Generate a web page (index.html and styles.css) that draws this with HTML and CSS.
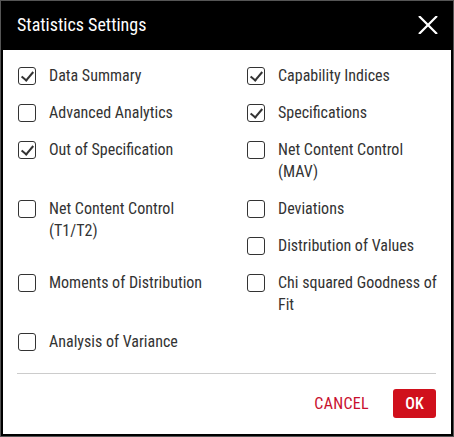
FILE: index.html
```html
<!DOCTYPE html>
<html>
<head>
<meta charset="utf-8">
<link rel="stylesheet" href="styles.css">
</head>
<body>
<div class="dialog">
  <div class="frame">
    <div class="header">
      <span class="title">Statistics Settings</span>
      <svg class="close" width="20" height="18" viewBox="0 0 20 18"><path d="M1 0 L19 18 M19 0 L1 18" stroke="#fff" stroke-width="2.2" fill="none"/></svg>
    </div>
    <div class="body">
      <div class="grid">
        <label class="item"><span class="cb checked"></span><span class="txt">Data Summary</span></label>
        <label class="item"><span class="cb checked"></span><span class="txt">Capability Indices</span></label>
        <label class="item"><span class="cb"></span><span class="txt">Advanced Analytics</span></label>
        <label class="item"><span class="cb checked"></span><span class="txt">Specifications</span></label>
        <label class="item"><span class="cb checked"></span><span class="txt">Out of Specification</span></label>
        <label class="item"><span class="cb"></span><span class="txt">Net Content Control (MAV)</span></label>
        <label class="item span2"><span class="cb"></span><span class="txt">Net Content Control (T1/T2)</span></label>
        <label class="item"><span class="cb"></span><span class="txt">Deviations</span></label>
        <label class="item"><span class="cb"></span><span class="txt">Distribution of Values</span></label>
        <label class="item"><span class="cb"></span><span class="txt">Moments of Distribution</span></label>
        <label class="item"><span class="cb"></span><span class="txt">Chi squared Goodness of Fit</span></label>
        <label class="item"><span class="cb"></span><span class="txt">Analysis of Variance</span></label>
      </div>
    </div>
    <div class="footer">
      <div class="actions">
        <button class="btn cancel">CANCEL</button>
        <button class="btn ok">OK</button>
      </div>
    </div>
  </div>
</div>
</body>
</html>
```
FILE: styles.css
```css
* { box-sizing: border-box; }
html, body { margin: 0; padding: 0; background: #fff; }
body {
  font-family: "Roboto Condensed", Roboto, "Liberation Sans", sans-serif;
}
.dialog {
  width: 454px;
  height: 437px;
  border: 1px solid #555;
}
.frame {
  height: 100%;
  border: 2px solid #000;
  display: flex;
  flex-direction: column;
  background: #fff;
}
.header {
  height: 47px;
  background: #000;
  display: flex;
  align-items: center;
  justify-content: space-between;
  padding: 0 13px 4px 14px;
}
.title {
  color: #fff;
  font-size: 18px;
  line-height: 22px;
}
.close { display: block; }
.body {
  padding: 7px 12px 0 15px;
  flex: 1;
}
.grid {
  display: grid;
  grid-template-columns: 190px 1fr;
  column-gap: 39px;
}
.item {
  display: flex;
  align-items: flex-start;
  gap: 13px;
  padding: 7.5px 0;
}
.span2 { grid-row: span 2; }
.cb {
  flex: none;
  width: 18px;
  height: 18px;
  margin-top: 2px;
  border: 1.5px solid #333;
  border-radius: 3px;
  position: relative;
}
.cb.checked::after {
  content: "";
  position: absolute;
  left: 5px;
  top: 1px;
  width: 5px;
  height: 10px;
  border-right: 2px solid #333;
  border-bottom: 2px solid #333;
  transform: rotate(40deg);
}
.txt {
  font-size: 16px;
  line-height: 22px;
  color: #333;
}
.footer {
  padding: 0 15px 16px 14px;
}
.actions {
  border-top: 1px solid #ccc;
  padding-top: 15px;
  display: flex;
  justify-content: flex-end;
  align-items: center;
  gap: 14px;
}
.btn {
  font-family: inherit;
  font-size: 16px;
  border: none;
  background: none;
  cursor: pointer;
  height: 29px;
  border-radius: 3px;
}
.cancel {
  color: #c8102e;
  padding: 0 10px;
  letter-spacing: 0.3px;
}
.ok {
  background: #d0101c;
  color: #fff;
  width: 43px;
  font-weight: 500;
  padding: 0;
}
```
